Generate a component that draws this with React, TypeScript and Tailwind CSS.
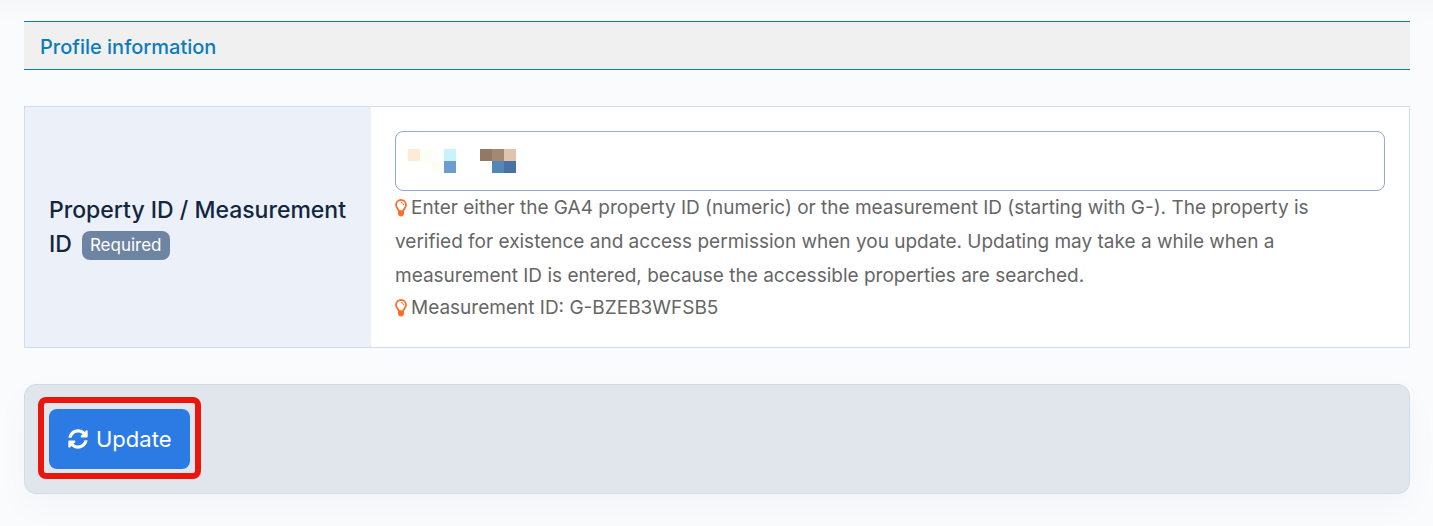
import { useState } from "react";
import { FaSyncAlt } from "react-icons/fa";

function BulbIcon() {
  return (
    <svg
      aria-hidden="true"
      viewBox="0 0 12 18"
      className="mr-1 inline h-[18px] w-3 align-[-3px] text-[#fd6f28]"
    >
      <path
        d="M4 12.2C3.600 10.100 1 9 1 6a5 5 0 0 1 10 0c0 3-2.600 4.100-3 6.200"
        fill="none"
        stroke="currentColor"
        strokeWidth="1.800"
      />
      <path
        d="M6.200 3.600c1.400 0 2.300.9 2.400 2.200"
        fill="none"
        stroke="currentColor"
        strokeWidth="1"
        strokeLinecap="round"
      />
      <path d="M3 11.200h6v3.600c0 1.500-1.300 2.700-3 2.700s-3-1.200-3-2.700z" fill="currentColor" />
    </svg>
  );
}

function Hint({ id, className, children }: { id: string; className: string; children: string }) {
  return (
    <p id={id} className={`pr-8 text-[19px] text-[#666666] ${className}`}>
      <BulbIcon />
      {children}
    </p>
  );
}

const mosaic = [
  [0, 0, "#feead5"],
  [1, 0, "#fffef5"],
  [3, 0, "#c7f2ff"],
  [6, 0, "#937963"],
  [7, 0, "#a38974"],
  [8, 0, "#e2c4ae"],
  [2, 1, "#fffef5"],
  [3, 1, "#6f9cd0"],
  [7, 1, "#5387b6"],
  [8, 1, "#4872a5"],
] as const;

function MaskedValue() {
  return (
    <svg
      aria-hidden="true"
      viewBox="0 0 9 2"
      shapeRendering="crispEdges"
      className="pointer-events-none absolute top-[18px] left-[13px] h-6 w-[108px]"
    >
      {mosaic.map(([x, y, fill]) => (
        <rect key={`${x}-${y}`} x={x} y={y} width="1" height="1" fill={fill} />
      ))}
    </svg>
  );
}

export default function App() {
  const [value, setValue] = useState("");

  return (
    <main className="min-h-screen bg-[#fafbfd] font-['Inter','Liberation_Sans',sans-serif]">
      <div className="h-[21px] bg-linear-to-b from-[#f6f7f9] to-[#fafbfd]" />
      <form className="pr-[23px] pb-8 pl-6" onSubmit={(e) => e.preventDefault()}>
        <h2 className="border-y border-[#0c7bbc] bg-[#f0f0f0] px-4 pt-[10px] pb-[6px] text-[20px] leading-[31px] font-medium text-[#0c7bbc]">
          Profile information
        </h2>

        <table className="mt-9 w-full table-fixed border-separate border-spacing-0 border border-[#d0dcea]">
          <tbody>
            <tr>
              <th
                scope="row"
                className="w-1/4 bg-[#ecf1f9] px-6 text-left align-middle text-[23px] leading-[34px] font-medium text-[#12263f]"
              >
                <label htmlFor="property-id">Property ID / Measurement ID</label>
                <span className="ml-[10px] inline-block rounded-lg bg-[#6e84a3] px-2 py-1 align-middle text-[17px] leading-[21px] font-normal text-white">
                  Required
                </span>
              </th>
              <td className="bg-white p-6">
                <div className="relative">
                  <input
                    id="property-id"
                    type="text"
                    required
                    value={value}
                    onChange={(e) => setValue(e.target.value)}
                    aria-describedby="property-hint measurement-hint"
                    className="block h-[60px] w-full rounded-lg border border-[#95aac9] bg-white px-3 text-[19px] text-[#12263f] outline-none"
                  />
                  {value === "" && <MaskedValue />}
                </div>
                <Hint id="property-hint" className="leading-[34px]">
                  Enter either the GA4 property ID (numeric) or the measurement ID (starting with G-). The property is verified for existence and access permission when you update. Updating may take a while when a measurement ID is entered, because the accessible properties are searched.
                </Hint>
                <Hint id="measurement-hint" className="leading-[30px]">
                  Measurement ID: G-BZEB3WFSB5
                </Hint>
              </td>
            </tr>
          </tbody>
        </table>

        <div className="mt-9 flex rounded-xl border border-[#d0dcea] bg-[#e1e6ed] p-6 shadow-[0_12px_36px_rgba(18,38,63,0.03)]">
          <div className="relative">
            <button
              type="submit"
              className="flex h-[60px] items-center gap-2 rounded-lg bg-[#2c7be5] px-[19px] text-[22px] text-white"
            >
              <FaSyncAlt aria-hidden="true" className="size-5" />
              Update
            </button>
            <div className="pointer-events-none absolute -inset-x-[11px] -top-3 -bottom-2.5 rounded-lg border-6 border-[#e9170b]" />
          </div>
        </div>
      </form>
    </main>
  );
}
